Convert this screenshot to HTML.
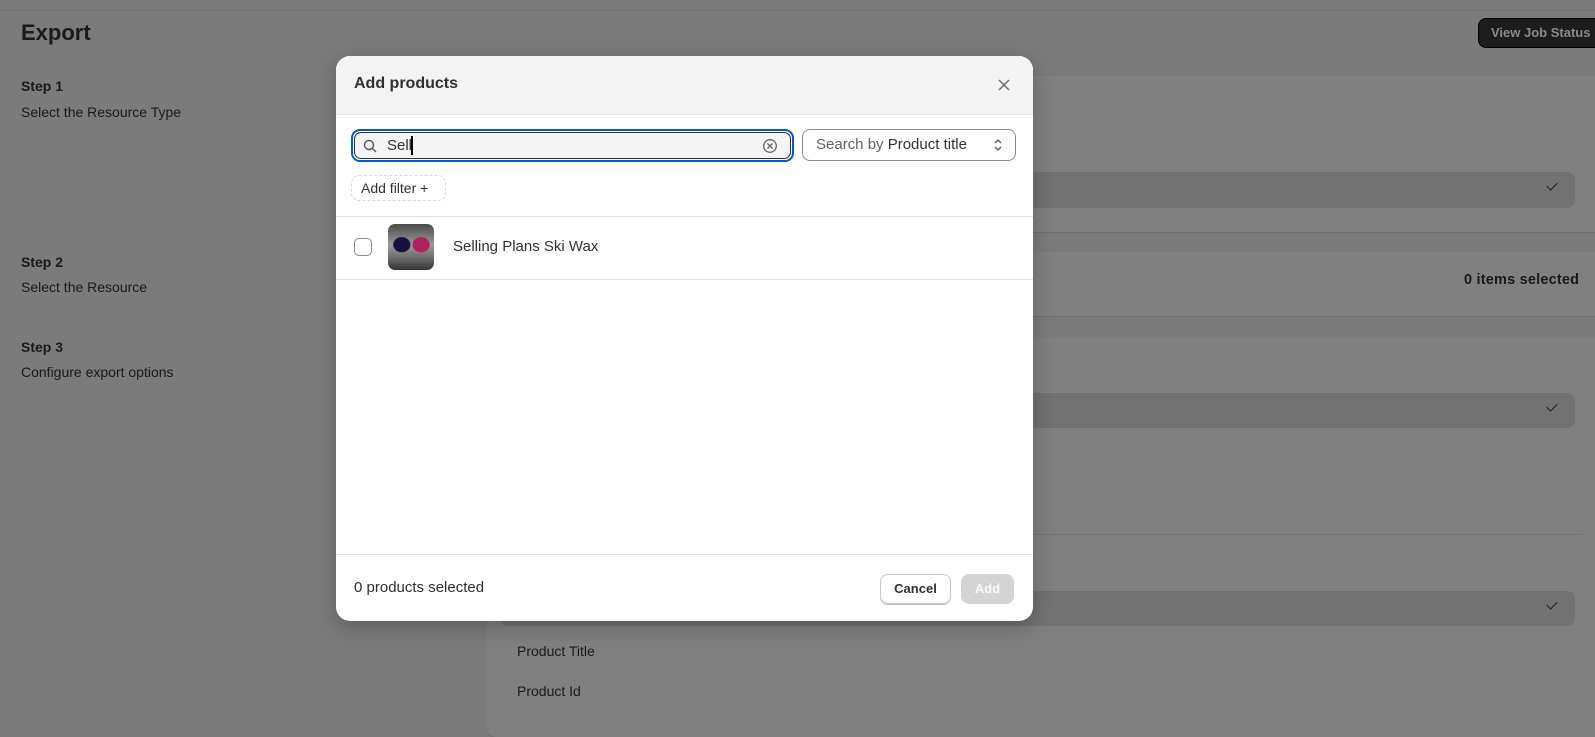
<!DOCTYPE html>
<html><head><style>
*{box-sizing:border-box;margin:0;padding:0}
body{width:1595px;height:704px;overflow:hidden;background:#7b7b7b;font-family:"Liberation Sans",sans-serif;color:#1e1e1e;position:relative}
.a{position:absolute}
.card{position:absolute;background:#808080;border-radius:10px;box-shadow:0 1px 0 #6e6e6e}
.sel{position:absolute;background:#727272;border-radius:8px}
.chk{position:absolute;right:18px;top:10px;width:10px;height:6px;border-left:1.5px solid #1a1a1a;border-bottom:1.5px solid #1a1a1a;transform:rotate(-45deg)}
.t{font-size:14px;color:#1a1a1a}
</style></head><body>
<div class="a" style="left:0;top:10px;width:1595px;height:1px;background:#737373"></div>
<div class="a" style="left:21px;top:20px;font-size:22px;font-weight:bold;color:#1a1a1a">Export</div>
<div class="a" style="left:1478px;top:18px;width:130px;height:30px;background:#1c1c1c;border-radius:8px;border:1px solid #000"></div>
<div class="a" style="left:1491px;top:25px;font-size:13px;font-weight:bold;color:#8a8a8a">View Job Status</div>

<div class="a" style="left:21px;top:78px;font-size:14px;font-weight:bold;color:#1a1a1a">Step 1</div>
<div class="a t" style="left:21px;top:104px">Select the Resource Type</div>
<div class="a" style="left:21px;top:254px;font-size:14px;font-weight:bold;color:#1a1a1a">Step 2</div>
<div class="a t" style="left:21px;top:279px">Select the Resource</div>
<div class="a" style="left:21px;top:339px;font-size:14px;font-weight:bold;color:#1a1a1a">Step 3</div>
<div class="a t" style="left:21px;top:364px">Configure export options</div>

<div class="card" style="left:486px;top:76px;width:1120px;height:156px"></div>
<div class="sel" style="left:500px;top:172px;width:1075px;height:36px"><div class="chk"></div></div>
<div class="card" style="left:486px;top:252px;width:1120px;height:64px"></div>
<div class="a" style="left:1464px;top:272px;font-size:14.5px;font-weight:bold;color:#1a1a1a;letter-spacing:0.2px">0 items selected</div>
<div class="card" style="left:486px;top:337px;width:1120px;height:400px"></div>
<div class="sel" style="left:500px;top:393px;width:1075px;height:35px"><div class="chk"></div></div>
<div class="a" style="left:500px;top:534px;width:1082px;height:1px;background:#737373"></div>
<div class="sel" style="left:500px;top:591px;width:1075px;height:35px"><div class="chk"></div></div>
<div class="a t" style="left:517px;top:643px">Product Title</div>
<div class="a t" style="left:517px;top:683px">Product Id</div>

<div class="a" style="left:336px;top:56px;width:697px;height:565px;background:#fff;border-radius:14px;overflow:hidden;box-shadow:0 6px 20px rgba(0,0,0,.25)">
 <div class="a" style="left:0;top:0;width:697px;height:59px;background:#f3f3f3;border-bottom:1px solid #e3e3e3"></div>
 <div class="a" style="left:18px;top:19px;font-size:16px;font-weight:bold;color:#303030">Add products</div>
 <svg class="a" style="left:661px;top:22px" width="14" height="14" viewBox="0 0 14 14"><path d="M2 2L12 12M12 2L2 12" stroke="#6b6b6b" stroke-width="1.5"/></svg>
 <div class="a" style="left:15px;top:73px;width:443px;height:33px;border:2px solid #005bd3;border-radius:9px;padding:1px"><div style="width:100%;height:100%;border:1px solid #303030;border-radius:7px;background:#f4f4f4"></div></div>
 <svg class="a" style="left:27px;top:83px" width="14" height="14" viewBox="0 0 14 14"><circle cx="6" cy="6" r="4.5" fill="none" stroke="#555" stroke-width="1.4"/><path d="M9.3 9.3L13 13" stroke="#555" stroke-width="1.4"/></svg>
 <div class="a" style="left:51px;top:81px;font-size:15px;color:#303030">Sell</div>
 <div class="a" style="left:75px;top:80px;width:1.5px;height:19px;background:#000"></div>
 <svg class="a" style="left:426px;top:82px" width="16" height="16" viewBox="0 0 16 16"><circle cx="8" cy="8" r="6.3" fill="none" stroke="#666" stroke-width="1.3"/><path d="M5.5 5.5L10.5 10.5M10.5 5.5L5.5 10.5" stroke="#666" stroke-width="1.3"/></svg>
 <div class="a" style="left:466px;top:73px;width:214px;height:32px;border:1px solid #8a8a8a;border-radius:8px"></div>
 <div class="a" style="left:480px;top:80px;font-size:15px;color:#616161">Search by <span style="color:#303030">Product title</span></div>
 <svg class="a" style="left:656px;top:81px" width="12" height="16" viewBox="0 0 12 16"><path d="M3 6L6 3L9 6M3 10L6 13L9 10" fill="none" stroke="#555" stroke-width="1.3"/></svg>
 <div class="a" style="left:15px;top:119px;width:95px;height:26px;border:1px dashed #d6d6d6;border-radius:8px"></div>
 <div class="a" style="left:25px;top:124px;font-size:14px;color:#303030">Add filter +</div>
 <div class="a" style="left:0;top:160px;width:697px;height:1px;background:#e3e3e3"></div>
 <div class="a" style="left:18px;top:182px;width:18px;height:18px;border:1px solid #8a8a8a;border-radius:5px"></div>
 <div class="a" style="left:52px;top:168px;width:46px;height:46px;border-radius:7px;background:radial-gradient(ellipse 9px 8px at 30% 45%,#1a1040 0 90%,transparent 100%),radial-gradient(ellipse 9px 8px at 72% 45%,#b0205a 0 90%,transparent 100%),linear-gradient(#4a4a4a,#9a9a9a 45%,#6a6a6a 75%,#333)"></div>
 <div class="a" style="left:117px;top:182px;font-size:15px;color:#303030">Selling Plans Ski Wax</div>
 <div class="a" style="left:0;top:223px;width:697px;height:1px;background:#e3e3e3"></div>
 <div class="a" style="left:0;top:498px;width:697px;height:1px;background:#e3e3e3"></div>
 <div class="a" style="left:18px;top:523px;font-size:15px;color:#303030">0 products selected</div>
 <div class="a" style="left:544px;top:518px;width:71px;height:30px;border:1px solid #c9c9c9;border-radius:8px;box-shadow:0 1px 0 #bbb;font-size:13px;font-weight:bold;color:#303030;text-align:center;line-height:28px">Cancel</div>
 <div class="a" style="left:625px;top:518px;width:53px;height:30px;background:#d4d4d4;border-radius:8px;font-size:13px;font-weight:bold;color:#fafafa;text-align:center;line-height:30px">Add</div>
</div>
</body></html>
